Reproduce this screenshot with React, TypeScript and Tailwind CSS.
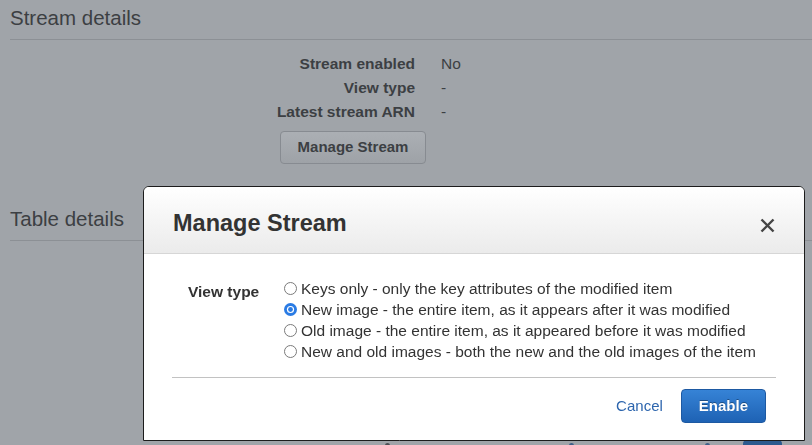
import React from 'react';

const viewTypes = [
  { id: 'KEYS_ONLY', label: 'Keys only - only the key attributes of the modified item' },
  { id: 'NEW_IMAGE', label: 'New image - the entire item, as it appears after it was modified' },
  { id: 'OLD_IMAGE', label: 'Old image - the entire item, as it appeared before it was modified' },
  { id: 'NEW_AND_OLD_IMAGES', label: 'New and old images - both the new and the old images of the item' },
];

function Radio({ checked }: { checked: boolean }) {
  return (
    <svg width="13" height="13" viewBox="0 0 13 13" className="shrink-0">
      {checked ? (
        <>
          <circle cx="6.5" cy="6.5" r="6.5" fill="#2a7be4" />
          <circle cx="6.5" cy="6.5" r="3.6" fill="#ffffff" />
          <circle cx="6.5" cy="6.5" r="2.4" fill="#2a7be4" />
        </>
      ) : (
        <circle cx="6.5" cy="6.5" r="6" fill="#ffffff" stroke="#7a7a7a" strokeWidth="1" />
      )}
    </svg>
  );
}

function ManageStreamModal() {
  const selected = 'NEW_IMAGE';

  return (
    <div className="fixed left-[143px] top-[186px] w-[662px] h-[255px] flex flex-col bg-white border border-[#1c1c1c] rounded-t-[6px] overflow-hidden">
      {/* Header */}
      <div className="h-[67px] shrink-0 flex items-center justify-between pt-[7px] pl-[29px] pr-[29px] border-b border-[#d6d6d6] bg-linear-to-b from-white to-[#ebebeb]">
        <h3 className="text-[23.5px] leading-none font-bold text-[#333333]">Manage Stream</h3>
        <button aria-label="Close" className="mt-[3px] text-[#444444]">
          <svg width="15" height="15" viewBox="0 0 15 15" fill="none" stroke="currentColor" strokeWidth="2.4" strokeLinecap="butt">
            <line x1="1.5" y1="1.5" x2="13.5" y2="13.5" />
            <line x1="13.5" y1="1.5" x2="1.5" y2="13.5" />
          </svg>
        </button>
      </div>

      {/* Body */}
      <div className="flex-1 px-[28px] pt-[24px]">
        <div className="flex text-[15.5px] leading-[21px] text-[#333333]">
          <div className="w-[112px] shrink-0 pl-[16px] pt-[3px] font-bold">View type</div>
          <div className="flex flex-col">
            {viewTypes.map((vt) => (
              <label key={vt.id} className="flex items-center gap-[4px] whitespace-nowrap">
                <Radio checked={vt.id === selected} />
                <span>{vt.label}</span>
              </label>
            ))}
          </div>
        </div>

        <div className="mt-[15px] border-t border-[#c2c2c2]" />

        <div className="mt-[11px] mr-[10px] flex items-center justify-end gap-[18px]">
          <button className="text-[15px] text-[#2e66ae]">Cancel</button>
          <button className="h-[34px] px-[17px] rounded-[4px] border border-[#1d59a2] bg-linear-to-b from-[#3683d6] to-[#1e62b4] text-white text-[15px] font-bold [text-shadow:0_-1px_0_rgba(0,0,0,0.35)]">
            Enable
          </button>
        </div>
      </div>
    </div>
  );
}

export default function App() {
  return (
    <div className="relative h-[445px] overflow-hidden bg-[#a0a4a9] text-[#3c3f43] font-['Liberation_Sans',Arial,sans-serif]">
      {/* Stream details */}
      <section className="ml-[10px] pt-[5px]">
        <h2 className="text-[20.5px] leading-[25px] pb-[9px] border-b border-[#8c9095]">Stream details</h2>
        <dl className="mt-[12px] grid grid-cols-[405px_1fr] gap-x-[26px] text-[15.5px] leading-[24px]">
          <dt className="text-right font-bold">Stream enabled</dt>
          <dd>No</dd>
          <dt className="text-right font-bold">View type</dt>
          <dd>-</dd>
          <dt className="text-right font-bold">Latest stream ARN</dt>
          <dd>-</dd>
        </dl>
        <button className="block ml-[270px] mt-[7px] h-[33px] w-[146px] rounded-[4px] border border-[#878b91] bg-linear-to-b from-[#abafb4] to-[#9ea2a7] text-[15px] font-bold text-[#3c3f43]">
          Manage Stream
        </button>
      </section>

      {/* Table details */}
      <section className="ml-[10px] mt-[42px]">
        <h2 className="text-[20.5px] leading-[25px] pb-[9px] border-b border-[#8c9095]">Table details</h2>
        <div className="mt-[196px] flex items-start h-[30px]">
          <span className="ml-[375px] mt-[6px] w-[5px] h-[6px] rounded-full bg-[#4a4d52]" />
          <span className="ml-[179px] mt-[6px] w-[5px] h-[6px] rounded-full bg-[#3d5f88]" />
          <span className="ml-[131px] mt-[6px] w-[5px] h-[6px] rounded-full bg-[#3d5f88]" />
          <span className="ml-[33px] mt-[3px] w-[39px] h-[30px] rounded-[4px] bg-[#2d5a8e]" />
        </div>
      </section>

      <ManageStreamModal />
    </div>
  );
}
